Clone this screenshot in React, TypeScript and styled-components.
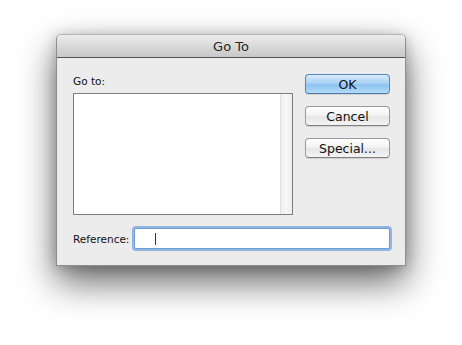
import React from 'react'
import styled, { createGlobalStyle } from 'styled-components'

const GlobalStyle = createGlobalStyle`
  html, body {
    margin: 0;
    padding: 0;
    background: #ffffff;
    font-family: 'DejaVu Sans', 'Liberation Sans', sans-serif;
  }
`

const Page = styled.div`
  padding: 34px 0 0 56px;
  width: 462px;
  height: 345px;
  box-sizing: border-box;
`

const Window = styled.div`
  width: 350px;
  box-sizing: border-box;
  border: 1px solid #8e8e8e;
  border-top-color: #b4b4b4;
  border-radius: 5px 5px 0 0;
  background: #ececec;
  box-shadow: 0 16px 36px rgba(0, 0, 0, 0.6), 0 2px 14px rgba(0, 0, 0, 0.2);
  display: flex;
  flex-direction: column;
`

const TitleBar = styled.div`
  height: 22px;
  border-bottom: 1px solid #565656;
  border-radius: 4px 4px 0 0;
  background: linear-gradient(#ececec, #d6d6d6 60%, #c9c9c9);
  display: flex;
  align-items: center;
  justify-content: center;
  font-size: 13px;
  color: #262626;
`

const Body = styled.div`
  padding: 16px 15px 16px 16px;
  display: flex;
  flex-direction: column;
  gap: 13px;
`

const TopRow = styled.div`
  display: flex;
  gap: 12px;
`

const ListColumn = styled.div`
  width: 220px;
  display: flex;
  flex-direction: column;
`

const Label = styled.div`
  font-size: 10.5px;
  line-height: 14px;
  color: #111;
  white-space: nowrap;
`

const ListLabel = styled(Label)`
  margin-bottom: 5px;
`

const ListBox = styled.div`
  height: 122px;
  box-sizing: border-box;
  border: 1px solid #7d7d7d;
  background: #fff;
  display: flex;
  justify-content: flex-end;
`

const ScrollTrack = styled.div`
  width: 11px;
  border-left: 1px solid #e2e2e2;
  background: linear-gradient(90deg, #efefef, #f7f7f7 50%, #ededed);
`

const ButtonColumn = styled.div`
  display: flex;
  flex-direction: column;
  gap: 12px;
`

const Button = styled.button<{ $primary?: boolean }>`
  width: 85px;
  height: 20px;
  padding: 0;
  border-radius: 4px;
  font-family: 'DejaVu Sans', 'Liberation Sans', sans-serif;
  font-size: 12.5px;
  color: #111;
  border: 1px solid ${p => (p.$primary ? '#5b86b4' : '#9a9a9a')};
  border-bottom-color: ${p => (p.$primary ? '#4d77a6' : '#7e7e7e')};
  background: ${p =>
    p.$primary
      ? 'linear-gradient(#d7ebfb, #a9d2f5 45%, #8cc3f0 55%, #b3dcf9)'
      : 'linear-gradient(#ffffff, #f3f3f3 45%, #e6e6e6 55%, #f4f4f4)'};
  box-shadow: 0 1px 1px rgba(0, 0, 0, 0.12);
`

const ReferenceRow = styled.div`
  display: flex;
  align-items: center;
  gap: 5px;
`

const ReferenceField = styled.div`
  flex: 1;
  height: 21px;
  box-sizing: border-box;
  border: 1px solid #6c9fd6;
  border-radius: 2px;
  background: #fff;
  box-shadow: 0 0 0 2px rgba(113, 163, 222, 0.75);
  display: flex;
  align-items: center;
  padding-left: 20px;
`

const Caret = styled.span`
  width: 1px;
  height: 12px;
  background: #333;
`

export default function App() {
  return (
    <>
      <GlobalStyle />
      <Page>
        <Window>
          <TitleBar>Go To</TitleBar>
          <Body>
            <TopRow>
              <ListColumn>
                <ListLabel>Go to:</ListLabel>
                <ListBox>
                  <ScrollTrack />
                </ListBox>
              </ListColumn>
              <ButtonColumn>
                <Button $primary>OK</Button>
                <Button>Cancel</Button>
                <Button>Special...</Button>
              </ButtonColumn>
            </TopRow>
            <ReferenceRow>
              <Label>Reference:</Label>
              <ReferenceField>
                <Caret />
              </ReferenceField>
            </ReferenceRow>
          </Body>
        </Window>
      </Page>
    </>
  )
}
